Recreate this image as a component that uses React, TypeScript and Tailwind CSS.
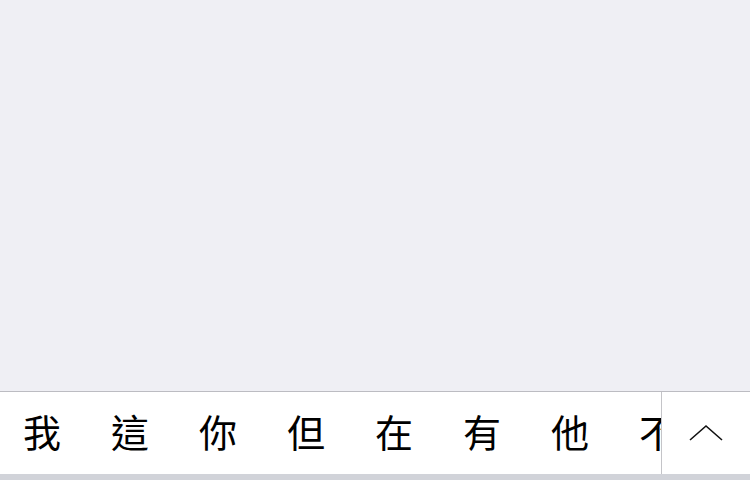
const candidates = ["我", "這", "你", "但", "在", "有", "他", "不"];

export default function App() {
  return (
    <div className="flex h-[480px] w-[750px] flex-col bg-[#efeff4]">
      <div className="flex-1" />
      <div className="flex h-[83px] border-t border-[#bcbcc2] bg-white">
        <div className="-ml-[2px] flex flex-1 overflow-hidden">
          {candidates.map((c) => (
            <div
              key={c}
              className="flex w-[88px] shrink-0 items-center justify-center pb-[4px] text-[38px] leading-none text-black"
              style={{ fontFamily: '"Noto Sans CJK TC", "Noto Sans CJK SC", sans-serif' }}
            >
              {c}
            </div>
          ))}
        </div>
        <div className="flex w-[89px] items-center justify-center border-l border-[#c4c4c8] bg-white">
          <svg width="34" height="18" viewBox="0 0 34 18" fill="none">
            <path d="M1 16 L17 2 L33 16" stroke="#111" strokeWidth="1.6" />
          </svg>
        </div>
      </div>
      <div className="h-[6px] bg-[#d1d3d9]" />
    </div>
  );
}
